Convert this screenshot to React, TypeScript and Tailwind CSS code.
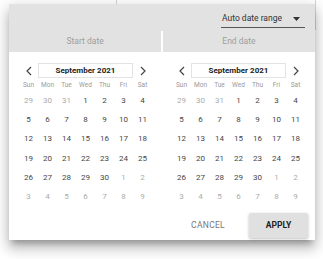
import * as React from 'react';

const dayNames = ['Sun', 'Mon', 'Tue', 'Wed', 'Thu', 'Fri', 'Sat'];

// September 2021 grid, with spill-over days from Aug / Oct
const days: { n: number; muted: boolean }[] = [
  ...[29, 30, 31].map(n => ({ n, muted: true })),
  ...Array.from({ length: 30 }, (_, i) => ({ n: i + 1, muted: false })),
  ...Array.from({ length: 9 }, (_, i) => ({ n: i + 1, muted: true })),
];

function Chevron({ dir }: { dir: 'left' | 'right' }) {
  return (
    <svg width="6" height="10" viewBox="0 0 6 10" className="text-[#444]">
      <path
        d={dir === 'left' ? 'M5 1 L1 5 L5 9' : 'M1 1 L5 5 L1 9'}
        fill="none"
        stroke="currentColor"
        strokeWidth="1.2"
      />
    </svg>
  );
}

function Calendar() {
  return (
    <div className="grid w-[133px] grid-cols-7">
      <div className="flex h-[15px] items-center justify-center">
        <Chevron dir="left" />
      </div>
      <div className="col-span-5 flex h-[15px] items-center justify-center border border-[#e3e3e3] bg-white text-[8px] font-bold text-[#222]">
        September 2021
      </div>
      <div className="flex h-[15px] items-center justify-center">
        <Chevron dir="right" />
      </div>
      {dayNames.map(d => (
        <div key={d} className="mt-[3px] flex h-[10px] items-center justify-center text-[6.5px] text-[#9a9a9a]">
          {d}
        </div>
      ))}
      {days.map((d, i) => (
        <div
          key={i}
          className={
            'flex h-[19.3px] items-center justify-center text-[8px] ' +
            (d.muted ? 'text-[#ababab]' : 'text-[#464646]')
          }
        >
          {d.n}
        </div>
      ))}
    </div>
  );
}

export default function App() {
  return (
    <div className="relative h-[259px] w-[323px] overflow-hidden bg-white font-['Roboto',sans-serif]">
      {/* field behind the popover */}
      <div className="ml-[116px] h-[30px] w-[200px] border-x border-[#d6d6d6]" />

      <div className="absolute left-[9px] top-[4px] flex h-[236px] w-[306px] flex-col bg-white shadow-[0_6px_6px_-3px_rgba(0,0,0,0.25),0_9px_12px_1px_rgba(0,0,0,0.16),0_3px_14px_2px_rgba(0,0,0,0.12)]">
        <div className="bg-[#e2e2e2]">
          <div className="flex h-[27px] justify-end pr-[10px]">
            <div className="mt-[6px] flex h-[18px] w-[84px] items-center justify-between border-b border-[#555] pl-[1px] pr-[5px] text-[8.5px] text-[#333]">
              <span>Auto date range</span>
              <svg width="7" height="4" viewBox="0 0 7 4">
                <path d="M0 0 H7 L3.5 4 Z" fill="#333" />
              </svg>
            </div>
          </div>
          <div className="flex h-[21px]">
            <div className="flex flex-1 items-center justify-center text-[8.5px] text-[#9e9e9e]">Start date</div>
            <div className="w-[1.5px] bg-white" />
            <div className="flex flex-1 items-center justify-center text-[8.5px] text-[#9e9e9e]">End date</div>
          </div>
        </div>

        <div className="mt-[11px] flex">
          <div className="flex flex-1 justify-center">
            <Calendar />
          </div>
          <div className="flex flex-1 justify-center">
            <Calendar />
          </div>
        </div>

        <div className="mt-auto mb-[2px] flex items-center justify-end gap-[24px] pr-[7px]">
          <span className="text-[8.5px] tracking-[0.3px] text-[#777]">CANCEL</span>
          <button className="h-[25px] w-[59px] rounded-[2px] bg-[#e0e0e0] text-[8.5px] font-bold text-[#222] shadow-[0_1px_3px_rgba(0,0,0,0.25)]">
            APPLY
          </button>
        </div>
      </div>
    </div>
  );
}
